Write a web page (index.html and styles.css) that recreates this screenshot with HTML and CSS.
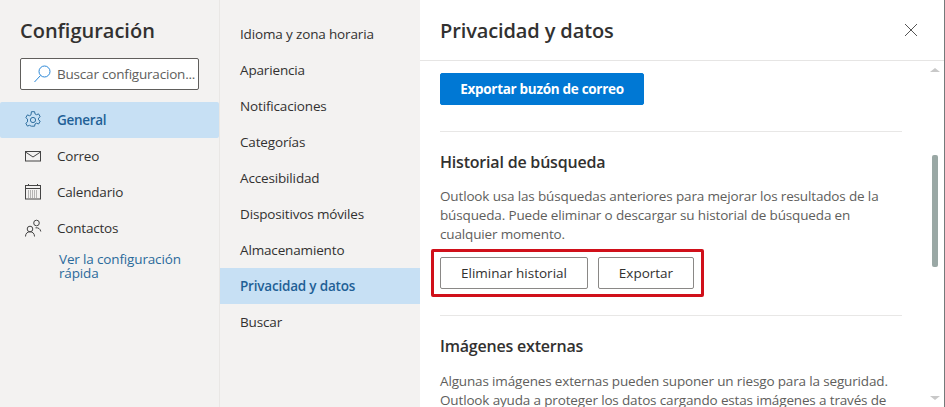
FILE: index.html
```html
<!DOCTYPE html>
<html lang="es">
<head>
<meta charset="UTF-8">
<meta name="viewport" content="width=device-width, initial-scale=1.0">
<title>Configuración</title>
<link rel="stylesheet" href="styles.css">
</head>
<body>
<div class="page">
  <aside class="side">
    <h1 class="side-title">Configuración</h1>
    <div class="search">
      <svg class="search-icon" width="18" height="18" viewBox="0 0 18 18" fill="none" stroke="#2b88d8" stroke-width="1"><circle cx="11.500" cy="6.500" r="5.500"/><path d="M7.500 10.500 1.500 17"/></svg>
      <span class="search-text">Buscar configuracion...</span>
    </div>
    <nav class="side-nav">
      <a class="side-item active">
        <svg width="18" height="18" viewBox="0 0 18 18" fill="none" stroke="#2f6f9f" stroke-width="1"><path d="M7.400 1h3.200l.4 2.200 1.500.8 2.100-.8 1.600 2.800-1.700 1.400v1.700l1.700 1.400-1.600 2.800-2.100-.8-1.500.8-.4 2.200H7.400L7 15.400l-1.500-.8-2.100.8-1.600-2.800 1.700-1.400V8.400L1.800 7l1.600-2.800 2.100.8L7 4.200z" transform="translate(0 -.3)"/><circle cx="9" cy="9" r="2.600"/></svg>
        General
      </a>
      <a class="side-item">
        <svg width="18" height="18" viewBox="0 0 18 18" fill="none" stroke="#444" stroke-width="1"><rect x="1.500" y="4.500" width="15" height="9.500"/><path d="M1.500 5 9 10l7.500-5"/></svg>
        Correo
      </a>
      <a class="side-item">
        <svg width="18" height="18" viewBox="0 0 18 18" fill="none" stroke="#444" stroke-width="1"><rect x="1.500" y="2.500" width="15" height="13.500"/><path d="M1.500 5.500h15M4.500 1v2M13.500 1v2"/><path d="M4 8h10M4 10h10M4 12h10M4 14h10" stroke-dasharray="1 1" stroke="#777"/></svg>
        Calendario
      </a>
      <a class="side-item">
        <svg width="18" height="18" viewBox="0 0 18 18" fill="none" stroke="#444" stroke-width="1"><circle cx="6" cy="10" r="2.800"/><path d="M1.500 17.500c0-3 1.800-4.700 4.500-4.700s4.500 1.700 4.500 4.700"/><circle cx="12.500" cy="4" r="2.800"/><path d="M11.500 8.800c2.700-.4 4.800 1 5.300 3.700"/></svg>
        Contactos
      </a>
    </nav>
    <a class="quick-link">Ver la configuración rápida</a>
  </aside>

  <nav class="sub-nav">
    <a class="sub-item">Idioma y zona horaria</a>
    <a class="sub-item">Apariencia</a>
    <a class="sub-item">Notificaciones</a>
    <a class="sub-item">Categorías</a>
    <a class="sub-item">Accesibilidad</a>
    <a class="sub-item">Dispositivos móviles</a>
    <a class="sub-item">Almacenamiento</a>
    <a class="sub-item active">Privacidad y datos</a>
    <a class="sub-item">Buscar</a>
  </nav>

  <main class="panel">
    <header class="panel-head">
      <h2 class="panel-title">Privacidad y datos</h2>
      <svg class="close-icon" width="14" height="14" viewBox="0 0 14 14" fill="none" stroke="#555" stroke-width="1"><path d="M1 1l12 12M13 1 1 13"/></svg>
    </header>
    <div class="panel-body">
      <a class="btn primary">Exportar buzón de correo</a>
      <hr class="rule first">
      <h3 class="section-title">Historial de búsqueda</h3>
      <p class="section-text">Outlook usa las búsquedas anteriores para mejorar los resultados de la búsqueda. Puede eliminar o descargar su historial de búsqueda en cualquier momento.</p>
      <div class="highlight">
        <a class="btn wide">Eliminar historial</a>
        <a class="btn narrow">Exportar</a>
      </div>
      <hr class="rule second">
      <h3 class="section-title">Imágenes externas</h3>
      <p class="section-text">Algunas imágenes externas pueden suponer un riesgo para la seguridad. Outlook ayuda a proteger los datos cargando estas imágenes a través de</p>
    </div>
    <div class="scrollbar">
      <span class="arrow up"></span>
      <span class="thumb"></span>
      <span class="arrow down"></span>
    </div>
  </main>
</div>
</body>
</html>
```

FILE: styles.css
```css
* {
  box-sizing: border-box;
}
html, body {
  margin: 0;
  height: 100%;
  overflow: hidden;
}
body {
  font-family: "Open Sans", "Noto Sans", "Liberation Sans", sans-serif;
  color: #323130;
  background: #fff;
}
a {
  display: block;
  color: inherit;
}

.page {
  display: grid;
  grid-template-columns: 220px 200px 525px;
  height: 407px;
}

/* left column */
.side {
  background: #f3f2f1;
  border-right: 1px solid #e9e7e5;
}
.side-title {
  margin: 0;
  padding: 15px 0 0 20px;
  height: 58px;
  font-size: 20px;
  line-height: 32px;
  font-weight: 600;
}
.search {
  display: flex;
  align-items: center;
  gap: 6px;
  width: 179px;
  height: 32px;
  margin-left: 20px;
  padding-left: 12px;
  background: #fff;
  border: 1px solid #605e5c;
  border-radius: 2px;
}
.search-text {
  font-size: 13.5px;
  letter-spacing: -0.2px;
  color: #605e5c;
  white-space: nowrap;
  overflow: hidden;
}
.side-nav {
  margin-top: 12px;
}
.side-item {
  display: flex;
  align-items: center;
  gap: 15px;
  height: 36px;
  padding-left: 24px;
  font-size: 13.5px;
  letter-spacing: -0.2px;
}
.side-item.active {
  background: #c7e0f4;
  font-weight: 600;
  border-radius: 2px;
  color: #1f6096;
  letter-spacing: -0.3px;
}
.quick-link {
  margin: 6px 20px 0 59px;
  font-size: 13.5px;
  line-height: 14px;
  letter-spacing: -0.15px;
  color: #2b6a9b;
}

/* middle column */
.sub-nav {
  padding-top: 16px;
  background: #f3f2f1;
}
.sub-item {
  height: 36px;
  padding-left: 20px;
  font-size: 13.5px;
  line-height: 36px;
  letter-spacing: -0.15px;
}
.sub-item.active {
  background: #c7e0f4;
  color: #1f6096;
  font-weight: 600;
  letter-spacing: -0.2px;
}

/* right panel */
.panel {
  position: relative;
  background: #fff;
  overflow: hidden;
  border-right: 1px solid #747a7b;
}
.panel-head {
  display: flex;
  align-items: center;
  justify-content: space-between;
  height: 61px;
  padding: 0 26px 0 20px;
  border-bottom: 1px solid #e6e5e4;
}
.panel-title {
  margin: 0;
  font-size: 20px;
  font-weight: 600;
  letter-spacing: -0.12px;
}
.panel-body {
  width: 462px;
  margin-left: 20px;
  padding-top: 12px;
}
.btn {
  height: 32px;
  font-size: 13.5px;
  line-height: 30px;
  text-align: center;
  background: #fff;
  border: 1px solid #8a8886;
  border-radius: 2px;
}
.btn.primary {
  width: 204px;
  background: #0078d4;
  border-color: #0078d4;
  color: #fff;
  font-weight: 700;
  letter-spacing: -0.3px;
}
.btn.wide {
  width: 148px;
}
.btn.narrow {
  width: 96px;
}
.rule {
  margin: 0;
  border: 0;
  border-top: 1px solid #e8e7e6;
}
.rule.first {
  margin-top: 26px;
}
.rule.second {
  margin-top: 18px;
}
.section-title {
  margin: 19px 0 14px;
  font-size: 16px;
  line-height: 22px;
  font-weight: 600;
  letter-spacing: -0.2px;
}
.rule.second + .section-title {
  margin-bottom: 15px;
}
.section-text {
  margin: 0;
  font-size: 13.5px;
  line-height: 19px;
  letter-spacing: -0.15px;
  color: #605e5c;
}
.highlight {
  display: flex;
  gap: 10px;
  width: 273px;
  height: 48px;
  margin: 5px 0 0 -9px;
  padding: 5px 6px;
  border: 3px solid #d0101a;
  border-radius: 2px;
}

/* scrollbar lies over the panel */
.scrollbar {
  position: absolute;
  top: 66px;
  right: 6px;
  bottom: 4px;
  width: 6px;
}
.thumb {
  position: absolute;
  top: 89px;
  left: 0;
  width: 6px;
  height: 112px;
  background: #9aa8a5;
  border-radius: 2px;
}
.arrow {
  position: absolute;
  left: -2px;
  border-left: 5px solid transparent;
  border-right: 5px solid transparent;
}
.arrow.up {
  top: 2px;
  border-bottom: 4px solid #c8c8c8;
}
.arrow.down {
  bottom: 3px;
  border-top: 4px solid #c8c8c8;
}
```
